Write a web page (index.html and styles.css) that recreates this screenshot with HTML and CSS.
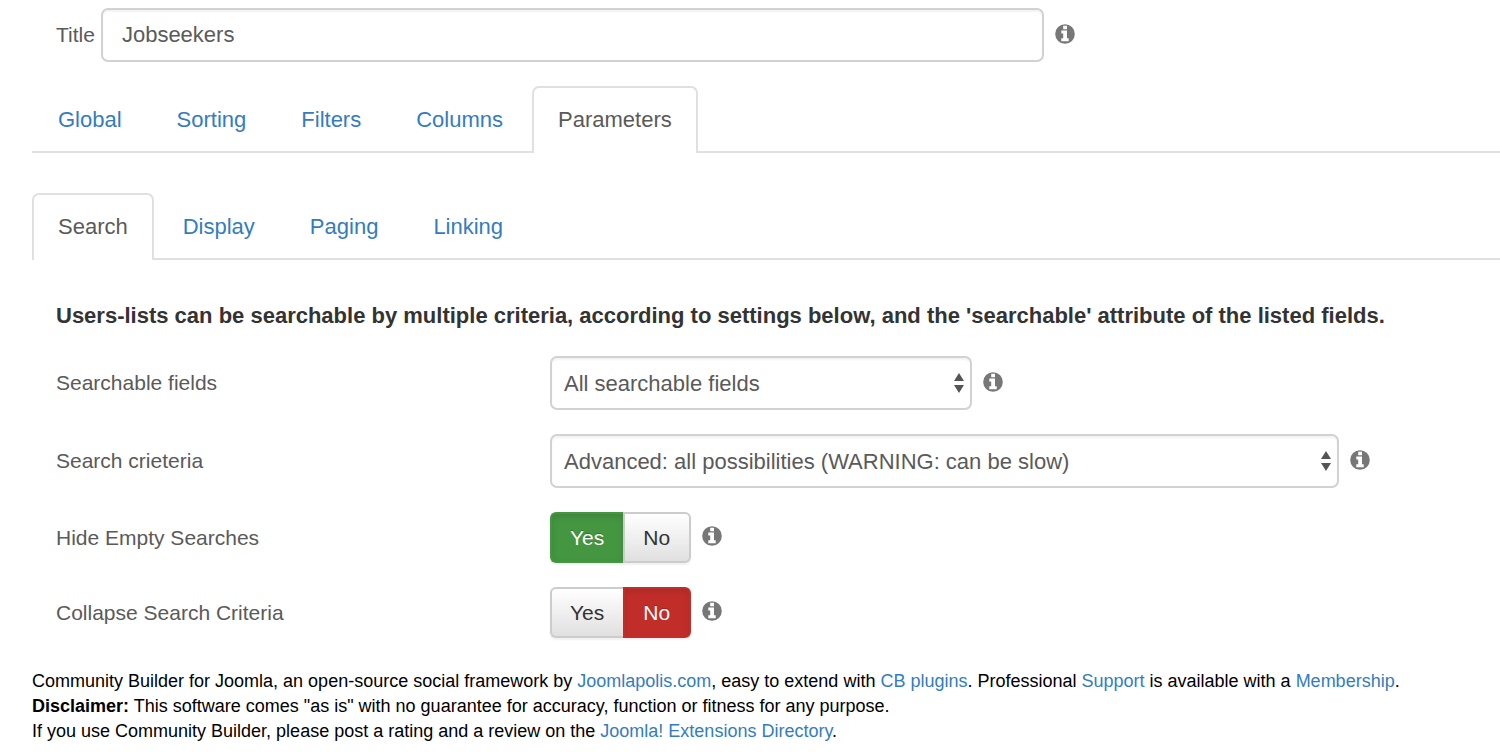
FILE: index.html
```html
<!DOCTYPE html>
<html lang="en">
<head>
    <meta charset="UTF-8">
    <meta name="viewport" content="width=device-width, initial-scale=1.0">
    <title>Jobseekers - Parameters</title>
    <link rel="stylesheet" href="styles.css">
</head>
<body>
    <svg class="sprite" aria-hidden="true">
        <symbol id="info" viewBox="0 0 20 20">
            <circle cx="10" cy="10" r="9.8" fill="#777"/>
            <path fill="#fff" d="M8.2 1.8h3.8v3.4H8.2zM6.3 6.6H12v7.7h1.7v3H6.3v-3h1.9V9.4H6.3z"/>
        </symbol>
    </svg>

    <div class="title-row">
        <label for="title">Title</label>
        <input class="field" type="text" id="title" value="Jobseekers">
        <svg class="info"><use href="#info"/></svg>
    </div>

    <nav class="tabs">
        <a href="#global">Global</a>
        <a href="#sorting">Sorting</a>
        <a href="#filters">Filters</a>
        <a href="#columns">Columns</a>
        <a href="#parameters" class="active">Parameters</a>
    </nav>

    <nav class="tabs sub-tabs">
        <a href="#search" class="active">Search</a>
        <a href="#display">Display</a>
        <a href="#paging">Paging</a>
        <a href="#linking">Linking</a>
    </nav>

    <form class="settings">
        <h1>Users-lists can be searchable by multiple criteria, according to settings below, and the 'searchable' attribute of the listed fields.</h1>

        <div class="row">
            <label for="fields">Searchable fields</label>
            <div class="control">
                <select class="field narrow" id="fields">
                    <option>All searchable fields</option>
                </select>
                <svg class="info"><use href="#info"/></svg>
            </div>
        </div>

        <div class="row">
            <label for="criteria">Search crieteria</label>
            <div class="control">
                <select class="field wide" id="criteria">
                    <option>Advanced: all possibilities (WARNING: can be slow)</option>
                </select>
                <svg class="info"><use href="#info"/></svg>
            </div>
        </div>

        <div class="row">
            <span id="hide-label">Hide Empty Searches</span>
            <div class="control">
                <div class="toggle" role="radiogroup" aria-labelledby="hide-label">
                    <input type="radio" name="hide" id="hide-yes" class="yes" checked>
                    <label for="hide-yes">Yes</label>
                    <input type="radio" name="hide" id="hide-no" class="no">
                    <label for="hide-no">No</label>
                </div>
                <svg class="info"><use href="#info"/></svg>
            </div>
        </div>

        <div class="row">
            <span id="collapse-label">Collapse Search Criteria</span>
            <div class="control">
                <div class="toggle" role="radiogroup" aria-labelledby="collapse-label">
                    <input type="radio" name="collapse" id="collapse-yes" class="yes">
                    <label for="collapse-yes">Yes</label>
                    <input type="radio" name="collapse" id="collapse-no" class="no" checked>
                    <label for="collapse-no">No</label>
                </div>
                <svg class="info"><use href="#info"/></svg>
            </div>
        </div>
    </form>

    <footer>
        <p>Community Builder for Joomla, an open-source social framework by <a href="#joomlapolis">Joomlapolis.com</a>, easy to extend with <a href="#plugins">CB plugins</a>. Professional <a href="#support">Support</a> is available with a <a href="#membership">Membership</a>.</p>
        <p><strong>Disclaimer:</strong> This software comes "as is" with no guarantee for accuracy, function or fitness for any purpose.</p>
        <p>If you use Community Builder, please post a rating and a review on the <a href="#extensions">Joomla! Extensions Directory</a>.</p>
    </footer>
</body>
</html>
```
FILE: styles.css
```css
* {
    box-sizing: border-box;
}
body {
    margin: 0;
    padding: 8px 0 0 32px;
    font-family: "Liberation Sans", Arial, sans-serif;
    font-size: 21px;
    color: #5a5a5a;
    background: #fff;
}
a {
    color: #337dbe;
    text-decoration: none;
}
.sprite {
    display: none;
}
.info {
    width: 20px;
    height: 20px;
    margin: 0 0 3px 11px;
    flex: none;
}

/* fields */
.field {
    height: 54px;
    padding: 0 19px;
    font-family: inherit;
    font-size: 22px;
    color: #5a5a5a;
    background-color: #fff;
    border: 2px solid #d2d2d2;
    border-radius: 7px;
    box-shadow: inset 0 2px 2px rgba(0, 0, 0, 0.05);
}
select.field {
    appearance: none;
    padding: 0 40px 0 12px;
    background-image: url("data:image/svg+xml,%3Csvg xmlns='http://www.w3.org/2000/svg' width='10' height='20'%3E%3Cpath fill='%23555' d='M5 0l5 8H0zM5 20l5-8H0z'/%3E%3C/svg%3E");
    background-repeat: no-repeat;
    background-position: right 6px center;
}
.narrow {
    width: 422px;
}
.wide {
    width: 789px;
}
.title-row {
    display: flex;
    align-items: center;
    padding-left: 24px;
}
.title-row .field {
    flex: 1;
    max-width: 943px;
    margin-left: 6px;
}

/* tabs */
.tabs {
    display: flex;
    gap: 3px;
    margin-top: 24px;
    border-bottom: 2px solid #e0e0e0;
}
.sub-tabs {
    margin-top: 40px;
}
.tabs a {
    padding: 17px 24px 18px;
    margin-bottom: -2px;
    font-size: 22px;
    line-height: 30px;
    border: 2px solid transparent;
    border-bottom: none;
    border-radius: 7px 7px 0 0;
}
.tabs .active {
    color: #5a5a5a;
    background: #fff;
    border-color: #e0e0e0;
}

/* settings */
.settings {
    padding: 41px 0 0 24px;
}
h1 {
    margin: 0 0 25px;
    font-size: 22px;
    line-height: 30px;
    color: #333;
}
.row {
    display: grid;
    grid-template-columns: 13fr 25fr;
    align-items: center;
    margin-bottom: 24px;
}
.control {
    display: flex;
    align-items: center;
}
.toggle {
    display: flex;
    border-radius: 6px;
    box-shadow: 0 2px 2px rgba(0, 0, 0, 0.06);
}
.toggle input {
    position: absolute;
    opacity: 0;
    margin: 0;
}
.toggle label {
    padding: 0 19px 0 18px;
    line-height: 47px;
    color: #333;
    background: linear-gradient(#fff, #e0e0e0);
    border: 2px solid #ccc;
    cursor: pointer;
}
.toggle .yes + label {
    border-right: none;
    border-radius: 6px 0 0 6px;
}
.toggle .no + label {
    border-radius: 0 6px 6px 0;
}
.toggle input:checked + label {
    color: #fff;
    text-shadow: 0 -1px 0 rgba(0, 0, 0, 0.25);
    box-shadow: inset 0 3px 6px rgba(0, 0, 0, 0.1);
}
.toggle .yes:checked + label {
    background: #449641;
    border-color: #449641;
}
.toggle .no:checked + label {
    background: #c12e2a;
    border-color: #c12e2a;
}

footer {
    margin-top: 31px;
    font-size: 18px;
    line-height: 25px;
    color: #000;
}
footer p {
    margin: 0;
}
```
